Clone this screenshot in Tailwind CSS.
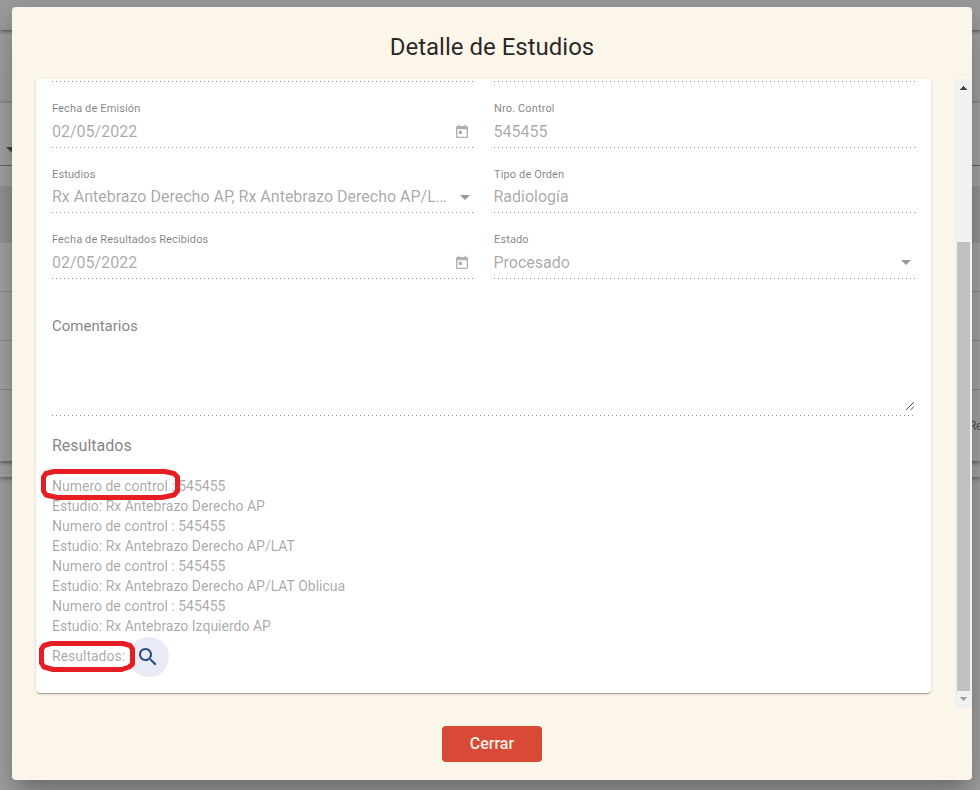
<!DOCTYPE html>
<html lang="es">
<head>
<meta charset="utf-8">
<title>Detalle de Estudios</title>
<script src="https://cdn.jsdelivr.net/npm/@tailwindcss/browser@4"></script>
</head>
<body class="relative h-[790px] w-[980px] overflow-hidden bg-[#a6a6a6] font-[Roboto,sans-serif]">
  <!-- Page behind the dialog -->
  <div class="isolate flex h-[790px] w-[980px] flex-col">
    <div class="relative z-10 h-[30px] shrink-0 bg-[#9d9d9d] shadow-[0_1px_4px_rgba(0,0,0,0.6)]"></div>
    <div class="relative h-[447px] shrink-0 bg-[#a9a9a9] shadow-[0_1px_5px_rgba(0,0,0,0.5)]">
      <div class="h-[73px] bg-[#a5a5a5]"></div>
      <div class="h-[358px] bg-[#a9a9a9] shadow-[0_1px_5px_rgba(0,0,0,0.6)]">
        <div class="flex h-[63px] items-end border-b border-[#666] pb-[13px] pl-[6px]">
          <div class="h-0 w-0 border-x-[5px] border-t-[5px] border-x-transparent border-t-[#444]"></div>
        </div>
        <div class="h-5"></div>
        <div class="h-[57px] bg-[#999]"></div>
        <div class="h-[49px] border-b border-[#8d8d8d]"></div>
        <div class="h-[49px] border-b border-[#8d8d8d]"></div>
        <div class="h-[49px] border-b border-[#8d8d8d]"></div>
        <div class="flex h-[71px] items-center justify-end text-xs text-[#555]"><span class="w-[11px] whitespace-nowrap tracking-[-0.500px]">Re</span></div>
      </div>
    </div>
  </div>

  <!-- Dialog -->
  <section class="absolute left-[12px] top-[7px] flex h-[773px] w-[960px] flex-col rounded-[4px] bg-[#fcf5e9] shadow-[0_11px_15px_-7px_rgba(0,0,0,0.2),0_24px_38px_3px_rgba(0,0,0,0.14),0_9px_46px_8px_rgba(0,0,0,0.12)]">
    <h1 class="flex h-[72px] shrink-0 items-center justify-center pt-2 text-2xl text-black/85">Detalle de Estudios</h1>

    <div class="flex h-[629px] shrink-0 pl-6">
      <div class="h-[614px] w-[895px] shrink-0 rounded-b-[4px] bg-white px-4 shadow-[0_2px_1px_-1px_rgba(0,0,0,0.2),0_1px_1px_rgba(0,0,0,0.14),0_1px_3px_rgba(0,0,0,0.12)]">
        <div class="grid grid-cols-[422px_422px] grid-rows-[3px_66px_65px_66px] gap-x-5 text-base text-black/36">
          <div class="flex items-end"><i class="block h-px w-full bg-[repeating-linear-gradient(to_right,#888_0_1px,transparent_1px_4px)]"></i></div>
          <div class="flex items-end"><i class="block h-px w-full bg-[repeating-linear-gradient(to_right,#888_0_1px,transparent_1px_4px)]"></i></div>

          <div class="flex flex-col justify-end">
            <span class="text-[11px] leading-[14px] tracking-[0.130px] text-black/50">Fecha de Emisión</span>
            <div class="flex h-[31px] items-center justify-between pr-1">
              <span>02/05/2022</span>
              <svg class="h-4 w-4" viewBox="0 0 24 24" fill="#b0b0b0"><path d="M19 3h-1V1h-2v2H8V1H6v2H5c-1.110 0-1.990.9-1.990 2L3 19c0 1.100.890 2 2 2h14c1.100 0 2-.9 2-2V5c0-1.100-.9-2-2-2zm0 16H5V8h14v11zM7 10h5v5H7z"/></svg>
            </div>
            <i class="block h-px w-full bg-[repeating-linear-gradient(to_right,#888_0_1px,transparent_1px_4px)]"></i>
          </div>
          <div class="flex flex-col justify-end">
            <span class="text-[11px] leading-[14px] tracking-[0.130px] text-black/50">Nro. Control</span>
            <div class="flex h-[31px] items-center"><span class="-ml-[0.500px]">545455</span></div>
            <i class="block h-px w-full bg-[repeating-linear-gradient(to_right,#888_0_1px,transparent_1px_4px)]"></i>
          </div>

          <div class="flex flex-col justify-end">
            <span class="text-[11px] leading-[14px] tracking-[0.130px] text-black/50">Estudios</span>
            <div class="flex h-[30px] items-center justify-between pr-1">
              <span class="whitespace-nowrap">Rx Antebrazo Derecho AP, Rx Antebrazo Derecho AP/L…</span>
              <div class="h-0 w-0 border-x-[5px] border-t-[5px] border-x-transparent border-t-[#999]"></div>
            </div>
            <i class="block h-px w-full bg-[repeating-linear-gradient(to_right,#888_0_1px,transparent_1px_4px)]"></i>
          </div>
          <div class="flex flex-col justify-end">
            <span class="text-[11px] leading-[14px] tracking-[0.130px] text-black/50">Tipo de Orden</span>
            <div class="flex h-[30px] items-center"><span class="-ml-[0.500px]">Radiología</span></div>
            <i class="block h-px w-full bg-[repeating-linear-gradient(to_right,#888_0_1px,transparent_1px_4px)]"></i>
          </div>

          <div class="flex flex-col justify-end">
            <span class="text-[11px] leading-[14px] tracking-[0.130px] text-black/50">Fecha de Resultados Recibidos</span>
            <div class="flex h-[31px] items-center justify-between pr-1">
              <span>02/05/2022</span>
              <svg class="h-4 w-4" viewBox="0 0 24 24" fill="#b0b0b0"><path d="M19 3h-1V1h-2v2H8V1H6v2H5c-1.110 0-1.990.9-1.990 2L3 19c0 1.100.890 2 2 2h14c1.100 0 2-.9 2-2V5c0-1.100-.9-2-2-2zm0 16H5V8h14v11zM7 10h5v5H7z"/></svg>
            </div>
            <i class="block h-px w-full bg-[repeating-linear-gradient(to_right,#888_0_1px,transparent_1px_4px)]"></i>
          </div>
          <div class="flex flex-col justify-end">
            <span class="text-[11px] leading-[14px] tracking-[0.130px] text-black/50">Estado</span>
            <div class="flex h-[31px] items-center justify-between pr-[5px]">
              <span class="-ml-[0.500px]">Procesado</span>
              <div class="h-0 w-0 border-x-[5px] border-t-[5px] border-x-transparent border-t-[#999]"></div>
            </div>
            <i class="block h-px w-full bg-[repeating-linear-gradient(to_right,#888_0_1px,transparent_1px_4px)]"></i>
          </div>
        </div>

        <div class="flex h-[137px] flex-col pt-[37px]">
          <span class="text-[15px] leading-5 text-black/50">Comentarios</span>
          <div class="flex flex-1 items-end justify-end pb-[5px] pr-px">
            <svg class="h-[8px] w-[8px]" viewBox="0 0 8 8" stroke="#555" stroke-width="1" fill="none"><path d="M0 8L8 0M4.500 8L8 4.500"/></svg>
          </div>
          <i class="block h-px w-full shrink-0 bg-[repeating-linear-gradient(to_right,#888_0_1px,transparent_1px_4px)]"></i>
        </div>

        <h2 class="pt-[18px] text-base leading-6 text-black/50">Resultados</h2>
        <div class="pt-[18px] text-sm leading-5 text-black/36">
          <p>Numero de control : 545455</p>
          <p>Estudio: Rx Antebrazo Derecho AP</p>
          <p>Numero de control : 545455</p>
          <p>Estudio: Rx Antebrazo Derecho AP/LAT</p>
          <p>Numero de control : 545455</p>
          <p>Estudio: Rx Antebrazo Derecho AP/LAT Oblicua</p>
          <p>Numero de control : 545455</p>
          <p>Estudio: Rx Antebrazo Izquierdo AP</p>
          <div class="flex h-[42px] items-center">
            <span class="w-[77px] pb-[2px]">Resultados:</span>
            <span class="flex h-10 w-10 items-center justify-center rounded-full bg-[#e8eaf6] pr-[2px]">
              <svg class="h-6 w-6" viewBox="0 0 24 24" fill="#2c4a7c"><path d="M15.500 14h-.790l-.280-.270C15.410 12.590 16 11.110 16 9.500 16 5.910 13.090 3 9.500 3S3 5.910 3 9.500 5.910 16 9.500 16c1.610 0 3.090-.590 4.230-1.570l.270.280v.790l5 4.990L20.490 19l-4.990-5zm-6 0C7.010 14 5 11.990 5 9.500S7.010 5 9.500 5 14 7.010 14 9.500 11.990 14 9.500 14z"/></svg>
            </span>
          </div>
        </div>
      </div>

      <!-- Scrollbar -->
      <div class="ml-6 flex w-[17px] flex-col items-center bg-[#f1f1f1]">
        <div class="flex h-[17px] items-center justify-center"><svg class="h-4 w-[7px]" viewBox="0 0 7 16" fill="#444"><path d="M3 6h1v1h1v1h1v1h1v1H0V9h1V8h1V7h1z"/></svg></div>
        <div class="mt-[146px] h-[449px] w-[13px] bg-[#c1c1c1]"></div>
        <div class="flex h-4 items-center justify-center"><svg class="h-4 w-[7px]" viewBox="0 0 7 16" fill="#a3a3a3"><path d="M0 6h7v1H6v1H5v1H4v1H3V9H2V8H1V7H0z"/></svg></div>
      </div>
    </div>

    <div class="flex justify-center pt-[18px]">
      <button class="h-9 w-[100px] rounded-[4px] bg-[#d94a36] text-base font-medium text-[#fcf0e4]">Cerrar</button>
    </div>
  </section>

  <!-- Highlight marks -->
  <svg class="absolute left-[40px] top-[467px] h-[34px] w-[142px]" viewBox="0 0 142 34" fill="none" stroke="#e71d24" stroke-width="5" stroke-linejoin="round"><path d="M14 4.500H125L134 6.500L137.500 10V24L134 28L122 30.500H17L6 28L3.500 24V10L6 6.500Z"/></svg>
  <svg class="absolute left-[38px] top-[639px] h-[35px] w-[99px]" viewBox="0 0 99 35" fill="none" stroke="#e71d24" stroke-width="5" stroke-linejoin="round"><path d="M13 4.500H85L92 6.500L94.500 10V25L91 28L84 30.500H15L6 28L3.500 24V10L6 6.500Z"/></svg>
</body>
</html>
